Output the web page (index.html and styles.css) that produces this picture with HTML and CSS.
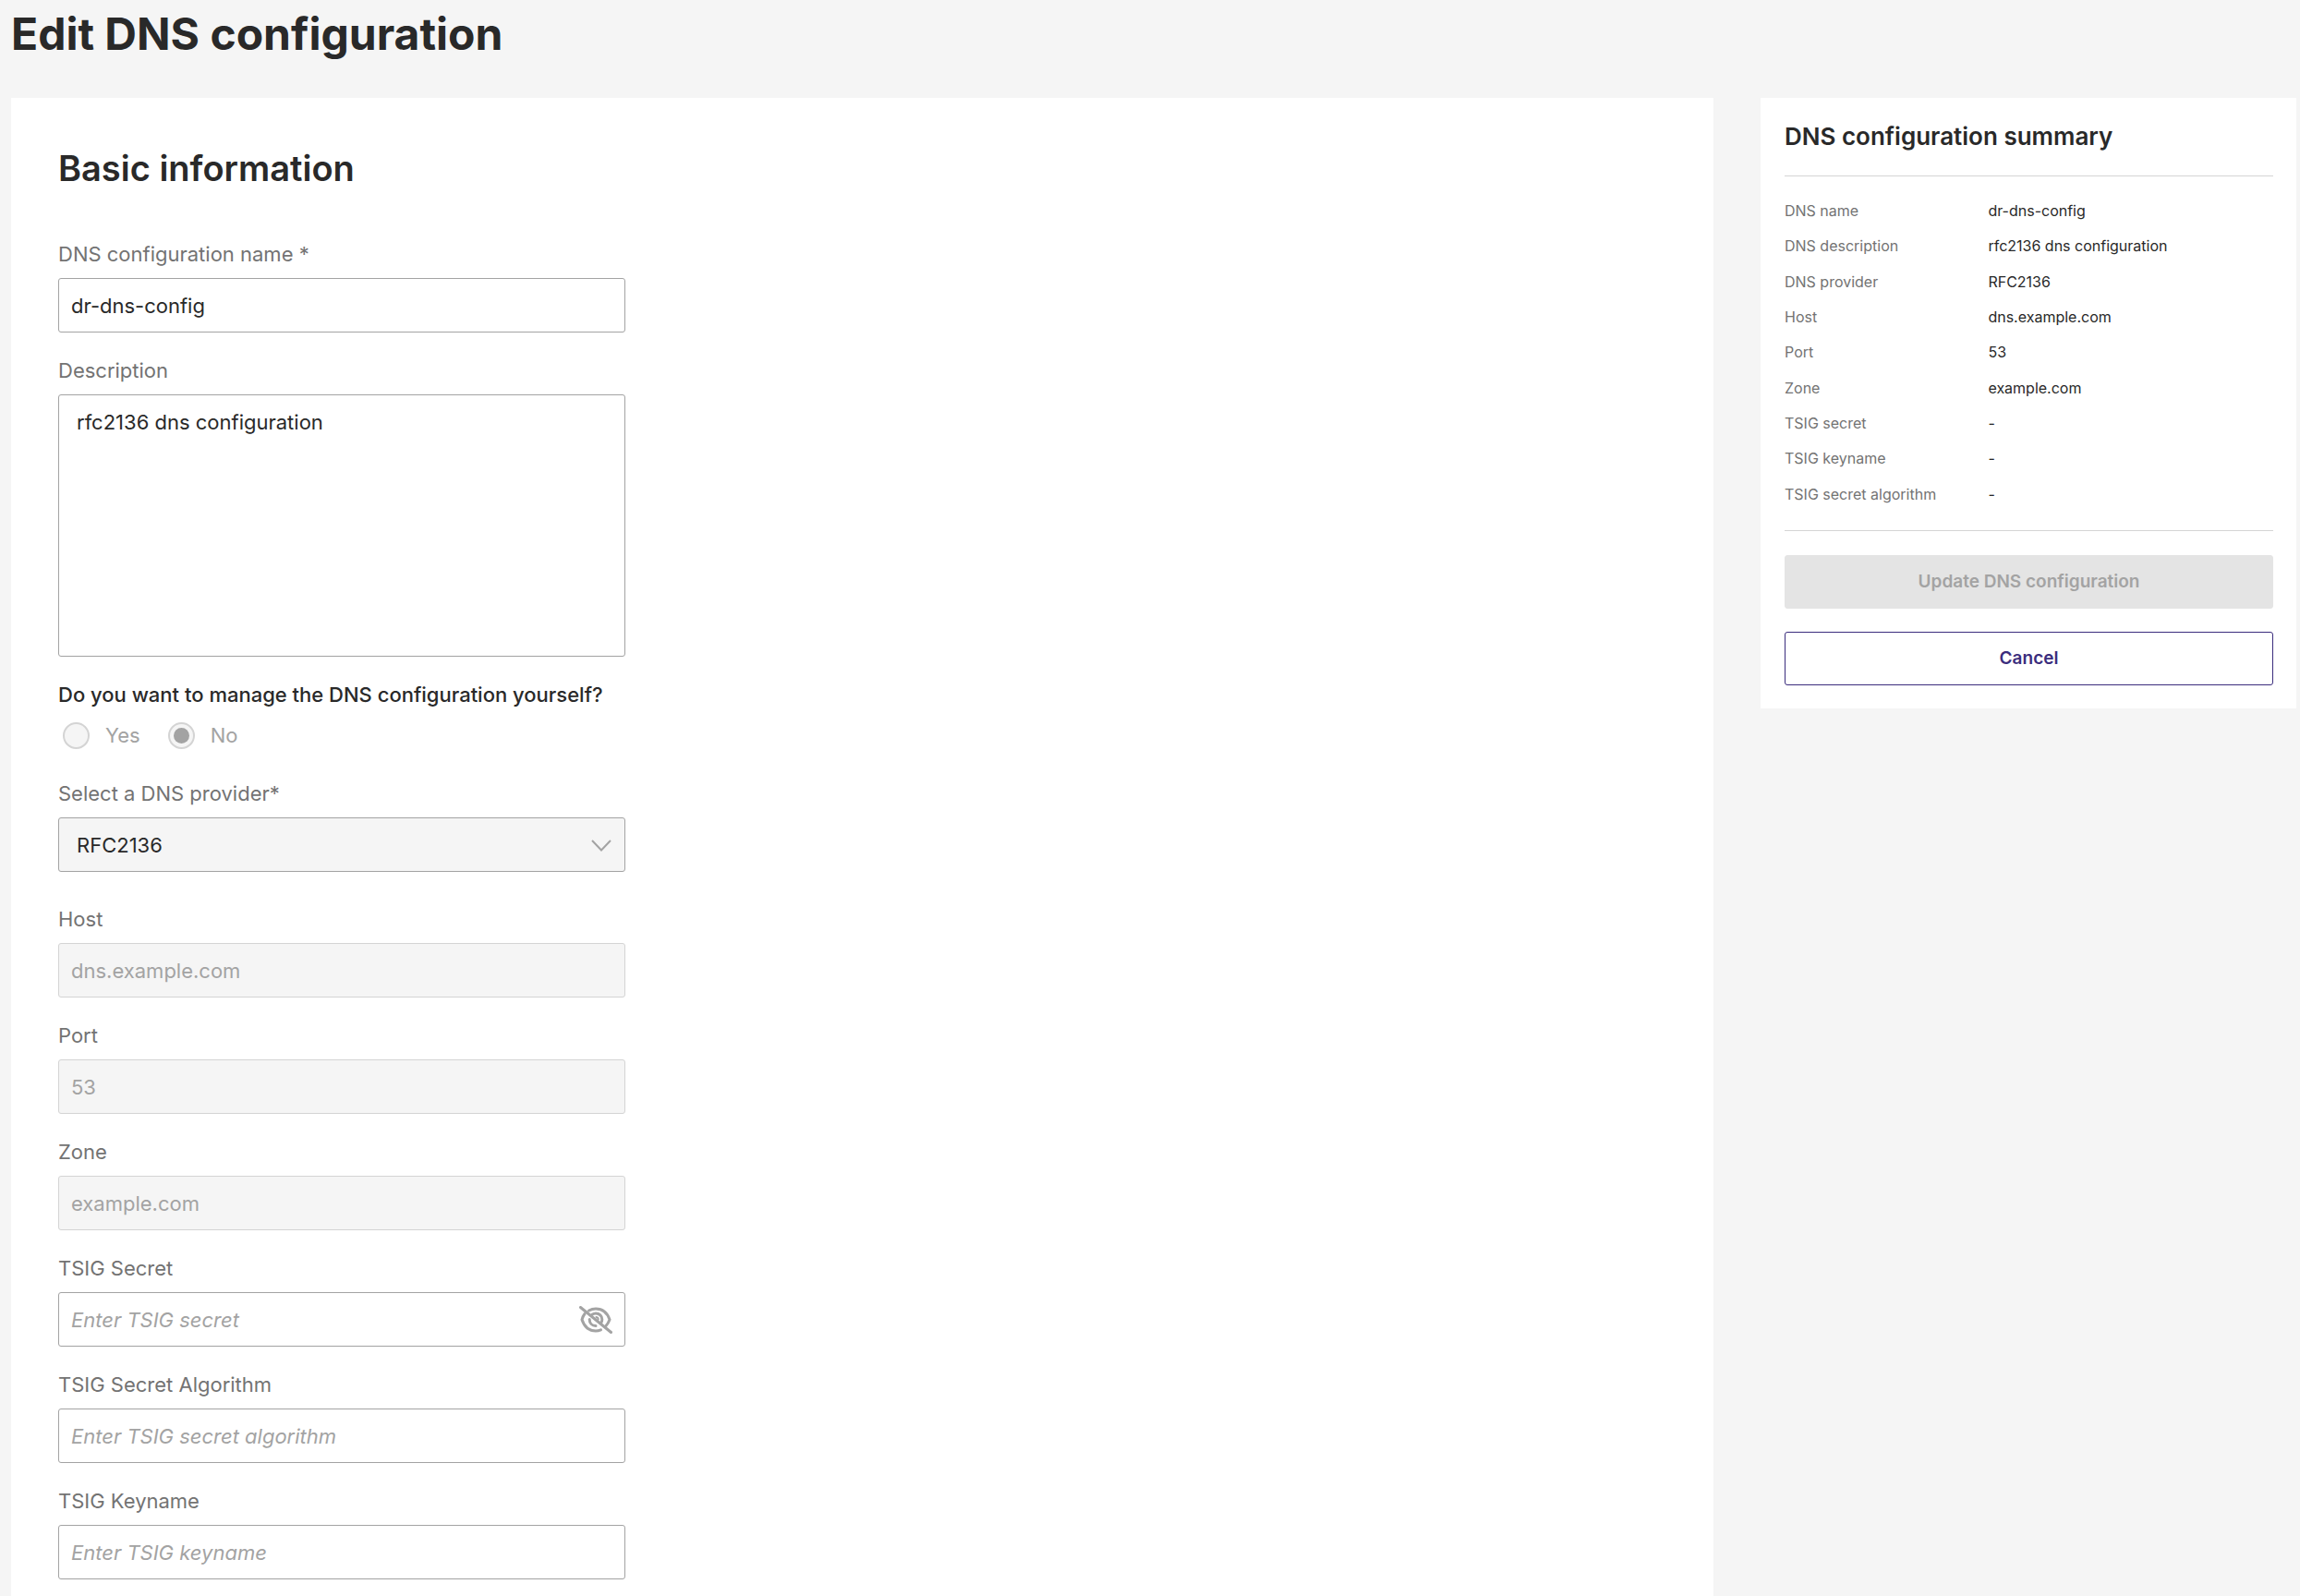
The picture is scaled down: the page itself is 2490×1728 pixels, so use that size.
FILE: index.html
```html
<!DOCTYPE html>
<html lang="en">
<head>
<meta charset="utf-8">
<meta name="viewport" content="width=device-width, initial-scale=1">
<title>Edit DNS configuration</title>
<link rel="stylesheet" href="styles.css">
</head>
<body>
<main class="page">
  <h1 class="page-title">Edit DNS configuration</h1>
  <div class="layout">
    <form class="card form-card" id="dns-form">
      <h2 class="section-title">Basic information</h2>
      <div class="fields">
        <div class="field">
          <label class="label" for="name">DNS configuration name *</label>
          <input class="control" id="name" type="text" value="dr-dns-config" required>
        </div>
        <div class="field">
          <label class="label" for="description">Description</label>
          <textarea class="control control-area" id="description">rfc2136 dns configuration</textarea>
        </div>
        <fieldset class="choice" disabled>
          <legend class="question">Do you want to manage the DNS configuration yourself?</legend>
          <div class="options">
            <label class="option"><input class="radio" type="radio" name="self-managed" value="yes">Yes</label>
            <label class="option"><input class="radio" type="radio" name="self-managed" value="no" checked>No</label>
          </div>
        </fieldset>
        <div class="field field-provider">
          <label class="label" for="provider">Select a DNS provider*</label>
          <div class="control-wrap">
            <select class="control control-select" id="provider" disabled>
              <option selected>RFC2136</option>
            </select>
            <svg class="chevron" viewBox="0 0 22 13" aria-hidden="true"><path d="M1 1l10 10.500L21 1"/></svg>
          </div>
        </div>
        <div class="field">
          <label class="label" for="host">Host</label>
          <input class="control" id="host" type="text" value="dns.example.com" disabled>
        </div>
        <div class="field">
          <label class="label" for="port">Port</label>
          <input class="control" id="port" type="text" value="53" disabled>
        </div>
        <div class="field">
          <label class="label" for="zone">Zone</label>
          <input class="control" id="zone" type="text" value="example.com" disabled>
        </div>
        <div class="field">
          <label class="label" for="secret">TSIG Secret</label>
          <div class="control-wrap">
            <input class="control control-secret" id="secret" type="password" placeholder="Enter TSIG secret">
            <button class="reveal" type="button" aria-label="Show secret">
              <svg class="eye" viewBox="0 0 36 30" aria-hidden="true">
                <path d="M10.500 5C12.800 3.700 15.300 3 18 3C25 3 30.500 7.500 33 14.800C32 17.500 30.700 19.700 29 21.500"/>
                <path d="M6 8.500C4.700 10.200 3.700 12.200 3 14.800C5.500 22.300 11 27 18 27C20 27 21.800 26.600 23.500 25.900"/>
                <path d="M14 9.300C15.200 8.500 16.500 8 18 8C22 8 24.800 11 24.800 14.500C24.800 15.800 24.500 17 23.900 18"/>
                <path d="M11.200 14.500C11.200 18.500 14 21.500 18 21.600"/>
                <path class="eye-glint" d="M18.500 12C19.900 12.200 20.700 13.200 20.700 14.500"/>
                <path d="M1.500 1.500L34.500 28.500"/>
              </svg>
            </button>
          </div>
        </div>
        <div class="field">
          <label class="label" for="algorithm">TSIG Secret Algorithm</label>
          <input class="control" id="algorithm" type="text" placeholder="Enter TSIG secret algorithm">
        </div>
        <div class="field">
          <label class="label" for="keyname">TSIG Keyname</label>
          <input class="control" id="keyname" type="text" placeholder="Enter TSIG keyname">
        </div>
      </div>
    </form>
    <aside class="card summary">
      <h2 class="summary-title">DNS configuration summary</h2>
      <dl class="summary-list">
        <dt>DNS name</dt><dd>dr-dns-config</dd>
        <dt>DNS description</dt><dd>rfc2136 dns configuration</dd>
        <dt>DNS provider</dt><dd>RFC2136</dd>
        <dt>Host</dt><dd>dns.example.com</dd>
        <dt>Port</dt><dd>53</dd>
        <dt>Zone</dt><dd>example.com</dd>
        <dt>TSIG secret</dt><dd>-</dd>
        <dt>TSIG keyname</dt><dd>-</dd>
        <dt>TSIG secret algorithm</dt><dd>-</dd>
      </dl>
      <div class="actions">
        <button class="button button-primary" type="submit" form="dns-form" disabled>Update DNS configuration</button>
        <button class="button button-outline" type="button">Cancel</button>
      </div>
    </aside>
  </div>
</main>
</body>
</html>
```
FILE: styles.css
```css
:root {
  --ink: #292929;
  --label: #737373;
  --muted: #a3a3a3;
  --line: #d4d4d4;
  --surface: #f5f5f5;
  --brand: #3b2d7d;
}

*, *::before, *::after {
  box-sizing: border-box;
}

body {
  margin: 0;
  background: var(--surface);
  color: var(--ink);
  font-family: Inter, "Liberation Sans", sans-serif;
  font-size: 22px;
  line-height: 32px;
}

h1, h2, dl, dd, fieldset {
  margin: 0;
}

input, textarea, select, button {
  margin: 0;
  font: inherit;
}

.page {
  display: flex;
  flex-direction: column;
  gap: 40px;
  min-height: 100vh;
  padding: 8px 4px 0 12px;
}

.page-title {
  font-size: 48px;
  font-weight: 700;
  line-height: 58px;
}

.layout {
  display: grid;
  grid-template-columns: minmax(0, 1fr) 580px;
  gap: 51px;
  align-items: start;
  flex: 1;
}

.card {
  background: #fff;
}

.form-card {
  align-self: stretch;
  padding: 51px 51px 17px;
}

.section-title {
  margin-bottom: 52px;
  font-size: 38px;
  font-weight: 600;
  line-height: 50px;
}

.fields {
  display: flex;
  flex-direction: column;
  gap: 25px;
  max-width: 614px;
}

.field {
  display: flex;
  flex-direction: column;
  gap: 10px;
}

.label {
  color: var(--label);
}

.control {
  display: block;
  width: 100%;
  height: 59px;
  padding: 0 13px;
  border: 1px solid var(--muted);
  border-radius: 3px;
  background: #fff;
  color: var(--ink);
}

.control:disabled {
  border-color: var(--line);
  background: var(--surface);
  color: var(--muted);
}

.control::placeholder {
  color: var(--muted);
  font-style: italic;
  opacity: 1;
}

.control-area {
  height: 284px;
  padding: 13px 19px;
  resize: none;
}

.control-wrap {
  position: relative;
}

.control-select,
.control-select:disabled {
  padding: 0 19px;
  border-color: var(--muted);
  color: var(--ink);
  opacity: 1;
  appearance: none;
}

.chevron {
  position: absolute;
  top: 24px;
  right: 15px;
  width: 22px;
  height: 13px;
  fill: none;
  stroke: var(--muted);
  stroke-width: 2;
  pointer-events: none;
}

.control-secret {
  padding-right: 64px;
}

.reveal {
  position: absolute;
  top: 15px;
  right: 14px;
  display: flex;
  padding: 0;
  border: 0;
  background: none;
}

.eye {
  width: 36px;
  height: 30px;
  fill: none;
  stroke: var(--muted);
  stroke-width: 3;
  stroke-linecap: round;
}

.eye-glint {
  stroke-width: 2;
}

.choice {
  min-width: 0;
  padding: 0;
  border: 0;
}

.question {
  margin-bottom: 12px;
  padding: 0;
  font-weight: 500;
  white-space: nowrap;
}

.options {
  display: flex;
  gap: 30px;
  padding-left: 5px;
  color: var(--muted);
}

.option {
  display: flex;
  align-items: center;
  gap: 17px;
}

.radio {
  display: grid;
  place-items: center;
  width: 29px;
  height: 29px;
  border: 2px solid var(--line);
  border-radius: 50%;
  background: var(--surface);
  appearance: none;
}

.radio:checked::before {
  width: 17px;
  height: 17px;
  border-radius: 50%;
  background: var(--muted);
  content: "";
}

.field-provider {
  padding: 6px 0 10px;
}

.summary {
  padding: 26px 25px 25px 26px;
}

.summary-title {
  padding-bottom: 26px;
  border-bottom: 1px solid var(--line);
  font-size: 26px;
  font-weight: 600;
  line-height: 32px;
}

.summary-list {
  display: grid;
  grid-template-columns: 5fr 7fr;
  grid-auto-rows: 1fr;
  align-items: center;
  min-height: 384px;
  padding: 18px 0 20px;
  border-bottom: 1px solid var(--line);
  font-size: 16px;
  line-height: 24px;
}

.summary-list dt {
  color: var(--label);
}

.actions {
  display: flex;
  flex-direction: column;
  gap: 25px;
  padding-top: 26px;
}

.button {
  height: 58px;
  border: 1px solid var(--brand);
  border-radius: 3px;
  font-size: 19px;
  font-weight: 600;
}

.button-primary:disabled {
  border-color: #e4e4e4;
  background: #e4e4e4;
  color: var(--muted);
}

.button-outline {
  background: #fff;
  color: var(--brand);
}
```
